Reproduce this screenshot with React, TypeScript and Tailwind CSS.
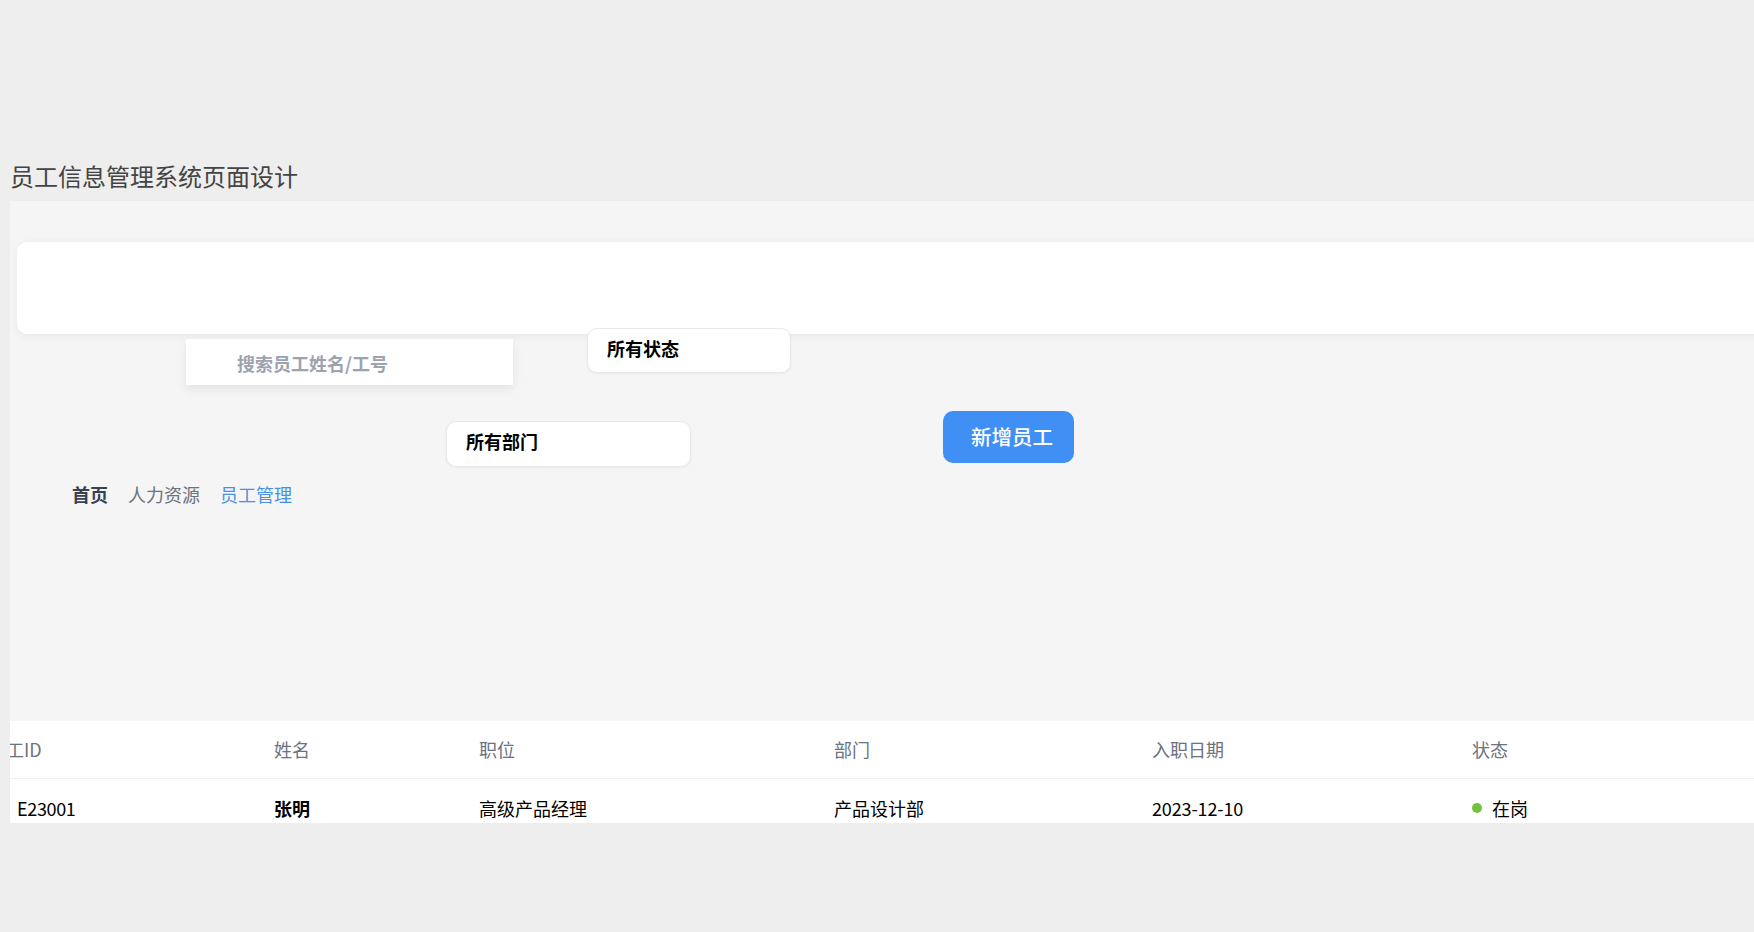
import React from 'react';

const fontStack = { fontFamily: '"Noto Sans CJK SC", "Noto Sans", sans-serif' };

const crumbs = [
  { label: '首页', className: 'font-semibold text-[#374151]' },
  { label: '人力资源', className: 'text-[#6b7280]' },
  { label: '员工管理', className: 'text-[#4a90e2]' },
];

const SelectBox: React.FC<{ label: string; className: string }> = ({ label, className }) => (
  <div
    className={`rounded-[10px] border border-[#e8e8e8] bg-white pt-[6px] pl-[19px] text-[18px] leading-[26px] font-semibold text-black shadow-[0_1px_3px_rgba(0,0,0,0.05)] ${className}`}
  >
    {label}
  </div>
);

const App: React.FC = () => {
  return (
    <div style={fontStack} className="h-[932px] overflow-hidden bg-[#eeeeee] pl-[10px] pt-[160px]">
      <h1 className="mb-[9px] text-[24px] leading-[32px] font-normal text-[#444444]">员工信息管理系统页面设计</h1>

      <div className="flex h-[622px] flex-col overflow-hidden bg-[#f5f5f5]">
        <div className="mt-[41px] ml-[7px] h-[92px] w-[1800px] shrink-0 rounded-[10px] bg-white shadow-[0_2px_8px_rgba(0,0,0,0.06)]" />

        <div className="relative -mt-[6px] flex items-start">
          <div className="mt-[11px] ml-[176px] h-[46px] w-[327px] bg-white pt-[11px] pl-[51px] text-[18px] leading-[26px] font-semibold text-[#9ca3af] shadow-[0_4px_10px_rgba(0,0,0,0.08)]">
            搜索员工姓名/工号
          </div>
          <SelectBox label="所有状态" className="ml-[74px] h-[45px] w-[204px]" />
        </div>

        <div className="mt-[26px] flex items-start">
          <SelectBox label="所有部门" className="mt-[10px] ml-[436px] h-[46px] w-[245px]" />
          <button className="ml-[252px] h-[52px] w-[131px] rounded-[10px] bg-[#3f8ff5] pb-[2px] pl-[28px] text-left text-[20.5px] font-medium text-white">
            新增员工
          </button>
        </div>

        <div className="mt-[13px] flex gap-5 pl-[62px] text-[18px] leading-[28px]">
          {crumbs.map((crumb) => (
            <span key={crumb.label} className={crumb.className}>
              {crumb.label}
            </span>
          ))}
        </div>

        <div className="mt-auto h-[102px] overflow-hidden bg-white">
          <table className="w-full table-fixed border-collapse text-left text-[18px]">
            <colgroup>
              <col className="w-[264px]" />
              <col className="w-[205px]" />
              <col className="w-[355px]" />
              <col className="w-[318px]" />
              <col className="w-[320px]" />
              <col />
            </colgroup>
            <thead>
              <tr className="h-[57px] border-b border-[#f0f0f0] text-[#6b7280]">
                <th className="font-normal">
                  <span className="-ml-[22px] inline-block">员工ID</span>
                </th>
                <th className="font-normal">姓名</th>
                <th className="font-normal">职位</th>
                <th className="font-normal">部门</th>
                <th className="font-normal">入职日期</th>
                <th className="font-normal">状态</th>
              </tr>
            </thead>
            <tbody>
              <tr className="text-black">
                <td className="pt-[16px] pl-[7px] tracking-[-0.35px]">E23001</td>
                <td className="pt-[16px] font-semibold">张明</td>
                <td className="pt-[16px]">高级产品经理</td>
                <td className="pt-[16px]">产品设计部</td>
                <td className="pt-[16px] tracking-[-0.12px]">2023-12-10</td>
                <td className="pt-[16px]">
                  <span className="flex items-center gap-[10px]">
                    <span className="h-[10px] w-[10px] rounded-full bg-[#73c23e]" />
                    在岗
                  </span>
                </td>
              </tr>
            </tbody>
          </table>
        </div>
      </div>
    </div>
  );
};

export default App;
